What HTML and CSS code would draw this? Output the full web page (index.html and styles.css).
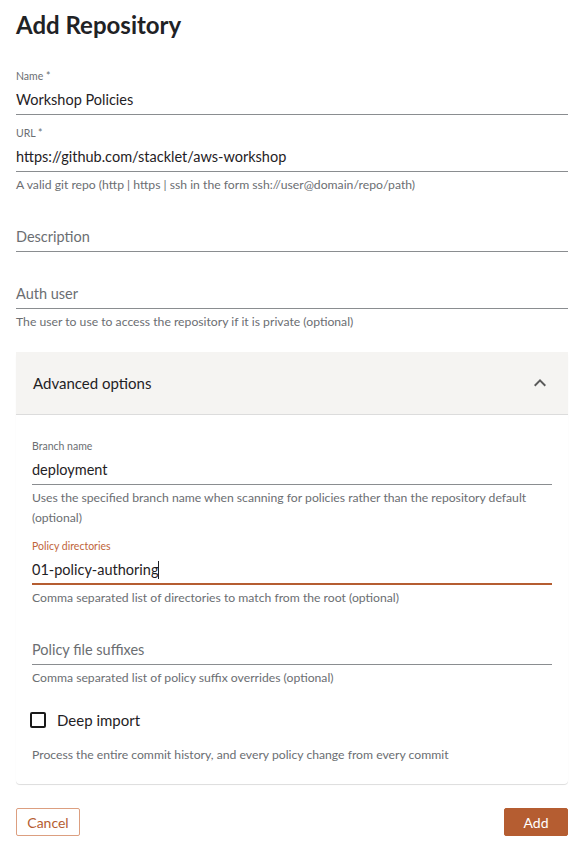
FILE: index.html
```html
<!DOCTYPE html>
<html lang="en">
<head>
<meta charset="utf-8">
<title>Add Repository</title>
<link rel="stylesheet" href="styles.css">
</head>
<body>
<main class="page">
  <h1 class="title">Add Repository</h1>

  <div class="field">
    <div class="label">Name *</div>
    <div class="input"><span class="value">Workshop Policies</span></div>
  </div>

  <div class="field">
    <div class="label">URL *</div>
    <div class="input"><span class="value">https://github.com/stacklet/aws-workshop</span></div>
    <div class="helper">A valid git repo (http | https | ssh in the form ssh://user@domain/repo/path)</div>
  </div>

  <div class="field">
    <div class="label"></div>
    <div class="input"><span class="placeholder">Description</span></div>
  </div>

  <div class="field">
    <div class="label"></div>
    <div class="input"><span class="placeholder">Auth user</span></div>
    <div class="helper">The user to use to access the repository if it is private (optional)</div>
  </div>

  <section class="panel">
    <div class="panel-header">
      <span class="panel-title">Advanced options</span>
      <svg class="chevron" width="24" height="24" viewBox="0 0 24 24"><path d="M7.41 15.41 12 10.83l4.59 4.58L18 14l-6-6-6 6z" fill="#5a5a5a"/></svg>
    </div>
    <div class="panel-body">
      <div class="field">
        <div class="label">Branch name</div>
        <div class="input"><span class="value">deployment</span></div>
        <div class="helper">Uses the specified branch name when scanning for policies rather than the repository default (optional)</div>
      </div>

      <div class="field focused">
        <div class="label">Policy directories</div>
        <div class="input"><span class="value">01-policy-authoring</span><span class="caret"></span></div>
        <div class="helper">Comma separated list of directories to match from the root (optional)</div>
      </div>

      <div class="field">
        <div class="label"></div>
        <div class="input"><span class="placeholder">Policy file suffixes</span></div>
        <div class="helper">Comma separated list of policy suffix overrides (optional)</div>
      </div>

      <label class="check">
        <span class="box"></span>
        <span class="check-label">Deep import</span>
      </label>
      <div class="helper check-helper">Process the entire commit history, and every policy change from every commit</div>
    </div>
  </section>

  <div class="actions">
    <button class="btn btn-outline">Cancel</button>
    <button class="btn btn-primary">Add</button>
  </div>
</main>
</body>
</html>
```

FILE: styles.css
```css
* { box-sizing: border-box; }
html, body { margin: 0; padding: 0; background: #fff; }
body {
  font-family: "Lato", "Noto Sans", sans-serif;
  color: #222;
}
.page {
  width: 552px;
  margin-left: 16px;
  padding-top: 8px;
}
.title {
  margin: 0;
  font-size: 24px;
  line-height: 34px;
  font-weight: 700;
  color: #1f2225;
  height: 34px;
  margin-bottom: 27px;
}
.field {
  margin-bottom: 11px;
}
.label {
  height: 14px;
  font-size: 10.5px;
  line-height: 14px;
  color: #6b6e72;
}
.input {
  margin-top: 6px;
  height: 26px;
  line-height: 22px;
  font-size: 14.5px;
  border-bottom: 1px solid #8a8d90;
  display: flex;
  align-items: flex-start;
}
.value { color: #1f2225; }
.placeholder { color: #6b6e72; }
.helper {
  margin-top: 3px;
  font-size: 12.2px;
  line-height: 20px;
  color: #6b6e72;
}
.focused .label { color: #c0653a; }
.focused .input {
  border-bottom: 2px solid #b55d31;
}
.caret {
  display: inline-block;
  width: 1px;
  height: 18px;
  margin-top: 2px;
  background: #1f2225;
}
.panel {
  margin-top: 20px;
  border-radius: 4px;
  box-shadow: 0 1px 1px rgba(0,0,0,0.08), 0 1px 0 rgba(0,0,0,0.06);
}
.panel-header {
  height: 63px;
  background: #f5f4f2;
  border-bottom: 1px solid #dcdcdc;
  display: flex;
  align-items: center;
  justify-content: space-between;
  padding: 0 16px 0 17px;
}
.panel-title {
  font-size: 15px;
  color: #1f2225;
}
.chevron { display: block; }
.panel-body {
  padding: 24px 16px 19px 16px;
}
.check {
  display: flex;
  align-items: center;
  height: 24px;
  margin-top: 20px;
}
.box {
  width: 16px;
  height: 16px;
  border: 2px solid #1a1a1a;
  border-radius: 2px;
  margin-left: -2px;
  margin-right: 11px;
}
.check-label {
  font-size: 15px;
  color: #1f2225;
}
.check-helper {
  margin-top: 13px;
}
.actions {
  display: flex;
  justify-content: space-between;
  margin-top: 24px;
}
.btn {
  height: 28px;
  width: 64px;
  font-family: inherit;
  font-size: 14px;
  border-radius: 2px;
  padding: 0;
  cursor: pointer;
}
.btn-outline {
  background: #fff;
  color: #b55d31;
  border: 1px solid #dc9f80;
}
.btn-primary {
  background: #b55d31;
  color: #fff;
  border: 1px solid #b55d31;
}
```
